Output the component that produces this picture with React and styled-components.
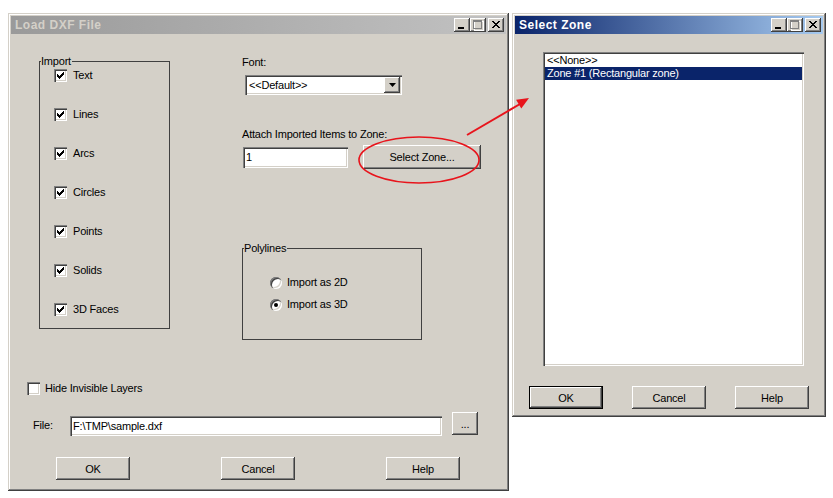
import React from "react";
import styled, { createGlobalStyle, css } from "styled-components";

const colors = {
  face: "#d4d0c8",
  shadow: "#808080",
  dark: "#404040",
  light: "#ffffff",
  select: "#0a246a",
  red: "#e8141c",
};

const GlobalStyle = createGlobalStyle`
  html, body {
    margin: 0;
    padding: 0;
    background: #fff;
  }
  body {
    font-family: "Liberation Sans", Arial, sans-serif;
    font-size: 11px;
    letter-spacing: -0.2px;
    color: #000;
  }
`;

const raised = css`
  background: ${colors.face};
  box-shadow: inset -1px -1px ${colors.dark}, inset 1px 1px ${colors.light},
    inset -2px -2px ${colors.shadow}, inset 2px 2px ${colors.face};
`;

const sunken = css`
  background: #fff;
  box-shadow: inset 1px 1px ${colors.shadow}, inset 2px 2px ${colors.dark},
    inset -1px -1px ${colors.light}, inset -2px -2px ${colors.face};
`;

const Desktop = styled.div`
  position: relative;
  width: 833px;
  height: 498px;
  overflow: hidden;
  background: #fff;
`;

const Window = styled.div`
  position: absolute;
  left: ${(p) => p.$x}px;
  top: ${(p) => p.$y}px;
  width: ${(p) => p.$w}px;
  height: ${(p) => p.$h}px;
  box-sizing: border-box;
  padding: 3px;
  display: flex;
  flex-direction: column;
  background: ${colors.face};
  box-shadow: inset -1px -1px ${colors.dark}, inset 1px 1px ${colors.face},
    inset -2px -2px ${colors.shadow}, inset 2px 2px ${colors.light};
`;

const TitleBar = styled.div`
  height: 18px;
  flex: none;
  display: flex;
  align-items: center;
  padding: 0 2px;
  background: ${(p) =>
    p.$active
      ? `linear-gradient(to right, ${colors.select}, #a6caf0)`
      : "linear-gradient(to right, #9a9a9a, #c2c2c2)"};
`;

const TitleText = styled.span`
  flex: 1;
  padding-left: 2px;
  font-weight: bold;
  font-size: 12px;
  letter-spacing: 0.5px;
  color: ${(p) => (p.$active ? "#fff" : colors.face)};
`;

const CaptionButton = styled.div`
  ${raised};
  width: 16px;
  height: 14px;
  margin-left: ${(p) => (p.$gap ? 2 : 0)}px;
  display: flex;
  align-items: center;
  justify-content: center;
  svg {
    display: block;
    shape-rendering: crispEdges;
  }
`;

const DialogBody = styled.div`
  flex: 1;
  display: flex;
  flex-direction: column;
`;

const TopSection = styled.div`
  display: flex;
  align-items: flex-start;
  gap: 72px;
  margin: 21px 0 0 28px;
`;

const GroupBox = styled.fieldset`
  box-sizing: border-box;
  width: ${(p) => p.$w}px;
  height: ${(p) => p.$h}px;
  margin: ${(p) => p.$top || 0}px 0 0 0;
  padding: ${(p) => p.$pt}px 0 0 ${(p) => p.$pl}px;
  border: 1px solid ${colors.dark};
  display: flex;
  flex-direction: column;
  gap: ${(p) => p.$gap}px;
`;

const Legend = styled.legend`
  padding: 0 1px 0 0;
  margin-left: ${(p) => -p.$indent}px;
  line-height: 13px;
`;

const OptionRow = styled.div`
  display: flex;
  align-items: center;
  height: 13px;
  gap: ${(p) => p.$gap || 6}px;
  margin: ${(p) => p.$margin || 0};
  line-height: 13px;
`;

const CheckBox = styled.span`
  ${sunken};
  width: 13px;
  height: 13px;
  flex: none;
  display: flex;
  align-items: center;
  justify-content: center;
  svg {
    display: block;
    shape-rendering: crispEdges;
  }
`;

const Radio = styled.span`
  width: 12px;
  height: 12px;
  flex: none;
  border-radius: 50%;
  background: #fff;
  box-shadow: inset 1px 1px ${colors.shadow}, inset 2px 2px ${colors.dark},
    inset -1px -1px ${colors.light}, inset -2px -2px ${colors.face};
  display: flex;
  align-items: center;
  justify-content: center;
  &::after {
    content: "";
    width: 4px;
    height: 4px;
    border-radius: 50%;
    background: ${(p) => (p.$on ? "#000" : "transparent")};
  }
`;

const RightColumn = styled.div`
  display: flex;
  flex-direction: column;
  padding-top: 1px;
`;

const FieldLabel = styled.div`
  line-height: 13px;
  margin-top: ${(p) => p.$top || 0}px;
`;

const Field = styled.div`
  ${sunken};
  box-sizing: border-box;
  width: ${(p) => p.$w}px;
  height: ${(p) => p.$h}px;
  margin: ${(p) => p.$margin || 0};
  padding: 0 3px;
  display: flex;
  align-items: center;
  white-space: nowrap;
`;

const Select = styled(Field)`
  padding: 2px 2px 2px 4px;
  justify-content: space-between;
`;

const DropButton = styled.div`
  ${raised};
  width: 16px;
  height: 16px;
  display: flex;
  align-items: center;
  justify-content: center;
`;

const ZoneRow = styled.div`
  display: flex;
  align-items: center;
  gap: 15px;
  margin-top: 4px;
`;

const Button = styled.div`
  ${raised};
  box-sizing: border-box;
  width: ${(p) => p.$w || 74}px;
  height: ${(p) => p.$h || 23}px;
  display: flex;
  align-items: center;
  justify-content: center;
  flex: none;
  ${(p) =>
    p.$default &&
    css`
      box-shadow: inset 0 0 0 1px #000, inset -2px -2px ${colors.dark},
        inset 2px 2px ${colors.light}, inset -3px -3px ${colors.shadow};
    `}
`;

const FileRow = styled.div`
  display: flex;
  align-items: flex-start;
  margin-top: 17px;
  height: 24px;
`;

const FileLabel = styled.div`
  width: 37px;
  margin: 7px 0 0 22px;
  line-height: 13px;
`;

const ButtonRow = styled.div`
  display: flex;
  gap: ${(p) => p.$gap}px;
  margin: ${(p) => p.$margin};
`;

const ListBox = styled.div`
  ${sunken};
  box-sizing: border-box;
  width: 261px;
  height: 314px;
  margin: 18px 0 0 28px;
  padding: 2px;
`;

const ListItem = styled.div`
  line-height: 13px;
  height: 13px;
  padding-left: 2px;
  white-space: nowrap;
  background: ${(p) => (p.$selected ? colors.select : "transparent")};
  color: ${(p) => (p.$selected ? "#fff" : "#000")};
`;

const Annotation = styled.svg`
  position: absolute;
  left: 0;
  top: 0;
  pointer-events: none;
`;

const CheckMark = () => (
  <svg width="7" height="7" viewBox="0 0 7 7">
    <path d="M0 2 L2 4 L7 -1 L7 2 L2 7 L0 5 Z" fill="#000" />
  </svg>
);

const CaptionButtons = () => (
  <>
    <CaptionButton>
      <svg width="16" height="14" viewBox="0 0 16 14">
        <rect x="4" y="9" width="6" height="2" fill="#000" />
      </svg>
    </CaptionButton>
    <CaptionButton>
      <svg width="16" height="14" viewBox="0 0 16 14">
        <rect x="4" y="3" width="9" height="9" fill="none" stroke="#fff" />
        <rect x="3.5" y="2.5" width="8" height="8" fill="none" stroke={colors.shadow} />
        <rect x="3" y="2" width="9" height="2" fill={colors.shadow} />
      </svg>
    </CaptionButton>
    <CaptionButton $gap>
      <svg width="16" height="14" viewBox="0 0 16 14">
        <path d="M4 3 L11 10 M5 3 L12 10 M11 3 L4 10 M12 3 L5 10" stroke="#000" strokeWidth="1" />
      </svg>
    </CaptionButton>
  </>
);

const importItems = ["Text", "Lines", "Arcs", "Circles", "Points", "Solids", "3D Faces"];

function LoadDxfDialog() {
  return (
    <Window $x={8} $y={13} $w={501} $h={478}>
      <TitleBar>
        <TitleText>Load DXF File</TitleText>
        <CaptionButtons />
      </TitleBar>
      <DialogBody>
        <TopSection>
          <GroupBox $w={131} $h={274} $pt={1} $pl={14} $gap={26}>
            <Legend $indent={13}>Import</Legend>
            {importItems.map((item) => (
              <OptionRow key={item}>
                <CheckBox>
                  <CheckMark />
                </CheckBox>
                {item}
              </OptionRow>
            ))}
          </GroupBox>
          <RightColumn>
            <FieldLabel>Font:</FieldLabel>
            <Select $w={157} $h={20} $margin="6px 0 0 3px">
              <span>&lt;&lt;Default&gt;&gt;</span>
              <DropButton>
                <svg width="7" height="4" viewBox="0 0 7 4">
                  <path d="M0 0 H7 L3.5 4 Z" fill="#000" />
                </svg>
              </DropButton>
            </Select>
            <FieldLabel $top={33}>Attach Imported Items to Zone:</FieldLabel>
            <ZoneRow>
              <Field $w={105} $h={21} $margin="0 0 0 1px">1</Field>
              <Button $w={118} $h={24}>Select Zone...</Button>
            </ZoneRow>
            <GroupBox $w={180} $h={98} $top={73} $pt={21} $pl={27} $gap={9}>
              <Legend $indent={26}>Polylines</Legend>
              <OptionRow $gap={5}>
                <Radio />
                Import as 2D
              </OptionRow>
              <OptionRow $gap={5}>
                <Radio $on />
                Import as 3D
              </OptionRow>
            </GroupBox>
          </RightColumn>
        </TopSection>
        <OptionRow $gap={5} $margin="42px 0 0 16px">
          <CheckBox />
          Hide Invisible Layers
        </OptionRow>
        <FileRow>
          <FileLabel>File:</FileLabel>
          <Field $w={372} $h={20} $margin="4px 10px 0 0">F:\TMP\sample.dxf</Field>
          <Button $w={26} $h={23}>...</Button>
        </FileRow>
        <ButtonRow $gap={91} $margin="21px 0 0 45px">
          <Button>OK</Button>
          <Button>Cancel</Button>
          <Button>Help</Button>
        </ButtonRow>
      </DialogBody>
    </Window>
  );
}

function SelectZoneDialog() {
  return (
    <Window $x={512} $y={13} $w={314} $h={404}>
      <TitleBar $active>
        <TitleText $active>Select Zone</TitleText>
        <CaptionButtons />
      </TitleBar>
      <DialogBody>
        <ListBox>
          <ListItem>&lt;&lt;None&gt;&gt;</ListItem>
          <ListItem $selected>Zone #1 (Rectangular zone)</ListItem>
        </ListBox>
        <ButtonRow $gap={29} $margin="20px 0 0 14px">
          <Button $default>OK</Button>
          <Button>Cancel</Button>
          <Button>Help</Button>
        </ButtonRow>
      </DialogBody>
    </Window>
  );
}

export default function App() {
  return (
    <Desktop>
      <GlobalStyle />
      <LoadDxfDialog />
      <SelectZoneDialog />
      <Annotation width="833" height="498" viewBox="0 0 833 498">
        <ellipse cx="419" cy="160" rx="60" ry="23" fill="none" stroke={colors.red} strokeWidth="1.6" />
        <line x1="467" y1="135" x2="520" y2="104" stroke={colors.red} strokeWidth="2" />
        <polygon points="529,98 521.3,108.4 516.1,99.8" fill={colors.red} />
      </Annotation>
    </Desktop>
  );
}
